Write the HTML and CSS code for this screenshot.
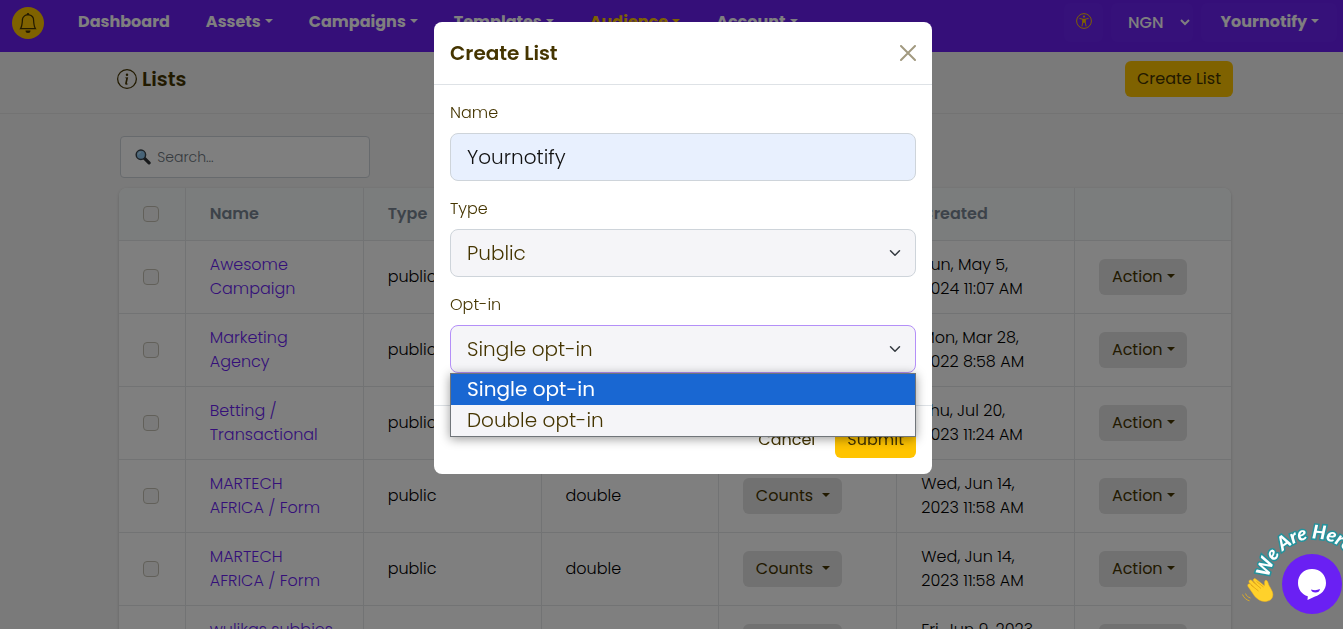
FILE: index.html
```html
<!DOCTYPE html>
<html lang="en">
  <head>
    <meta charset="UTF-8" />
    <meta name="viewport" content="width=device-width, initial-scale=1" />
    <title>Lists</title>
    <link rel="stylesheet" href="styles.css">
  </head>
  <body>
    <header class="navbar">
      <button class="bell" aria-label="Notifications">
        <svg width="20" height="20" viewBox="0 0 16 16" fill="currentColor">
          <path d="M8 16a2 2 0 0 0 2-2H6a2 2 0 0 0 2 2M8 1.918l-.797.161A4 4 0 0 0 4 6c0 .628-.134 2.197-.459 3.742-.160.767-.376 1.566-.663 2.258h10.244c-.287-.692-.502-1.490-.663-2.258C12.134 8.197 12 6.628 12 6a4 4 0 0 0-3.203-3.920zM14.220 12c.223.447.481.801.780 1H1c.299-.199.557-.553.780-1C2.680 10.200 3 6.880 3 6c0-2.420 1.720-4.440 4.005-4.901a1 1 0 1 1 1.990 0A5 5 0 0 1 13 6c0 .880.320 4.200 1.220 6" />
        </svg>
      </button>
      <nav class="nav">
        <a href="#">Dashboard</a>
        <a href="#" class="caret">Assets</a>
        <a href="#" class="caret">Campaigns</a>
        <a href="#" class="caret">Templates</a>
        <a href="#" class="caret active">Audience</a>
        <a href="#" class="caret">Account</a>
      </nav>
      <div class="nav-right">
        <button class="nav-box access" aria-label="Accessibility">
          <svg width="16" height="16" viewBox="0 0 16 16" fill="none" stroke="currentColor">
            <circle cx="8" cy="8" r="7.400" />
            <circle cx="8" cy="3.600" r="1.100" fill="currentColor" stroke="none" />
            <path d="M3.800 5.500l3 .7v3L6 13M12.200 5.500l-3 .7v3l.8 3.800" stroke-linecap="round" />
            <path d="M6.500 5.800h3v4h-3z" fill="currentColor" stroke="none" />
          </svg>
        </button>
        <select class="nav-box currency" aria-label="Currency">
          <option>NGN</option>
        </select>
        <a href="#" class="nav-box user caret">Yournotify</a>
      </div>
    </header>

    <div class="page-head">
      <h1>
        <svg width="20" height="20" viewBox="0 0 16 16" fill="currentColor">
          <path d="M8 15A7 7 0 1 1 8 1a7 7 0 0 1 0 14m0 1A8 8 0 1 0 8 0a8 8 0 0 0 0 16" />
          <path d="m8.930 6.588-2.290.287-.082.380.450.083c.294.070.352.176.288.469l-.738 3.468c-.194.897.105 1.319.808 1.319.545 0 1.178-.252 1.465-.598l.088-.416c-.200.176-.492.246-.686.246-.275 0-.375-.193-.304-.533zM9 4.500a1 1 0 1 1-2 0 1 1 0 0 1 2 0" />
        </svg>
        Lists
      </h1>
      <button class="btn btn-yellow">Create List</button>
    </div>

    <main class="content">
      <div class="search">
        <svg width="18" height="18" viewBox="0 0 18 18">
          <path d="M10.500 10.500l5 5" stroke="#303438" stroke-width="3.600" stroke-linecap="round" />
          <circle cx="6.500" cy="6.500" r="5.200" fill="#8fc7ee" stroke="#39424a" stroke-width="1.600" />
          <path d="M3.800 6.200a3 3 0 0 1 2.600-2.500" stroke="#d5efff" fill="none" />
        </svg>
        <input type="search" placeholder="Search..." aria-label="Search lists" />
      </div>

      <table class="lists">
        <colgroup>
          <col class="col-check" />
          <col class="col" span="5" />
          <col />
        </colgroup>
        <thead>
          <tr>
            <th class="check"><input type="checkbox" aria-label="Select all" /></th>
            <th>Name</th>
            <th>Type</th>
            <th>Opt-in</th>
            <th>Counts</th>
            <th>Created</th>
            <th></th>
          </tr>
        </thead>
        <tbody>
          <tr>
            <td class="check"><input type="checkbox" aria-label="Select row" /></td>
            <td><a href="#">Awesome Campaign</a></td>
            <td>public</td>
            <td>single</td>
            <td><button class="btn btn-gray counts caret">Counts</button></td>
            <td>Sun, May 5, 2024 11:07 AM</td>
            <td><button class="btn btn-gray caret">Action</button></td>
          </tr>
          <tr>
            <td class="check"><input type="checkbox" aria-label="Select row" /></td>
            <td><a href="#">Marketing Agency</a></td>
            <td>public</td>
            <td>single</td>
            <td><button class="btn btn-gray counts caret">Counts</button></td>
            <td>Mon, Mar 28, 2022 8:58 AM</td>
            <td><button class="btn btn-gray caret">Action</button></td>
          </tr>
          <tr>
            <td class="check"><input type="checkbox" aria-label="Select row" /></td>
            <td><a href="#">Betting / Transactional</a></td>
            <td>public</td>
            <td></td>
            <td></td>
            <td>Thu, Jul 20,<br />2023 11:24 AM</td>
            <td><button class="btn btn-gray caret">Action</button></td>
          </tr>
          <tr>
            <td class="check"><input type="checkbox" aria-label="Select row" /></td>
            <td><a href="#">MARTECH AFRICA / Form</a></td>
            <td>public</td>
            <td>double</td>
            <td><button class="btn btn-gray counts caret">Counts</button></td>
            <td>Wed, Jun 14,<br />2023 11:58 AM</td>
            <td><button class="btn btn-gray caret">Action</button></td>
          </tr>
          <tr>
            <td class="check"><input type="checkbox" aria-label="Select row" /></td>
            <td><a href="#">MARTECH AFRICA / Form</a></td>
            <td>public</td>
            <td>double</td>
            <td><button class="btn btn-gray counts caret">Counts</button></td>
            <td>Wed, Jun 14,<br />2023 11:58 AM</td>
            <td><button class="btn btn-gray caret">Action</button></td>
          </tr>
          <tr>
            <td class="check"><input type="checkbox" aria-label="Select row" /></td>
            <td><a href="#">wulikas subbies<br />list</a></td>
            <td>public</td>
            <td>double</td>
            <td><button class="btn btn-gray counts caret">Counts</button></td>
            <td>Fri, Jun 9, 2023<br />9:30 AM</td>
            <td><button class="btn btn-gray caret">Action</button></td>
          </tr>
        </tbody>
      </table>
    </main>

    <div class="backdrop">
      <form class="modal" role="dialog" aria-labelledby="modalTitle">
        <div class="modal-header">
          <h2 id="modalTitle">Create List</h2>
          <button type="button" class="close" aria-label="Close">
            <svg width="16" height="16" viewBox="0 0 16 16" stroke="currentColor" stroke-width="2" stroke-linecap="round">
              <path d="M1 1l14 14M15 1L1 15" />
            </svg>
          </button>
        </div>
        <div class="modal-body">
          <div class="field">
            <label for="name">Name</label>
            <input type="text" id="name" class="control filled" value="Yournotify" />
          </div>
          <div class="field">
            <label for="type">Type</label>
            <div class="select-wrap">
              <select id="type" class="control">
                <option>Public</option>
              </select>
              <svg class="chevron" width="12" height="12" viewBox="0 0 16 16" fill="none" stroke="currentColor" stroke-width="2" stroke-linecap="round" stroke-linejoin="round">
                <path d="m2 5 6 6 6-6" />
              </svg>
            </div>
          </div>
          <div class="field">
            <label for="optin">Opt-in</label>
            <div class="select-wrap">
              <select id="optin" class="control focused">
                <option>Single opt-in</option>
                <option>Double opt-in</option>
              </select>
              <svg class="chevron" width="12" height="12" viewBox="0 0 16 16" fill="none" stroke="currentColor" stroke-width="2" stroke-linecap="round" stroke-linejoin="round">
                <path d="m2 5 6 6 6-6" />
              </svg>
              <ul class="options" role="listbox" aria-label="Opt-in">
                <li role="option" aria-selected="true">Single opt-in</li>
                <li role="option" aria-selected="false">Double opt-in</li>
              </ul>
            </div>
          </div>
        </div>
        <div class="modal-footer">
          <button type="button" class="btn btn-link">Cancel</button>
          <button type="submit" class="btn btn-yellow">Submit</button>
        </div>
      </form>
    </div>

    <!-- Chat launcher -->
    <button class="chat" aria-label="Open chat">
      <svg width="140" height="120" viewBox="0 0 140 120">
        <defs>
          <path id="arc" d="M29 69A46 46 0 0 1 120 69" />
        </defs>
        <circle cx="72" cy="75" r="30" fill="#6a20f3" />
        <path d="M72 60c8.300 0 14 6 14 14 0 7-5 11.500-11 13.500L67.500 91l.3-3.800C61.500 85.500 58 80 58 74c0-8 5.700-14 14-14z" fill="#fff" />
        <path d="M71 80.500q5 1.500 9-.5-.5 3.500-4.500 3.500t-4.500-3z" fill="#6a20f3" />
        <text class="chat-text"><textPath href="#arc">We Are Here</textPath></text>
        <g fill="#ffd12b" stroke="#f0b31c" stroke-width=".5">
          <path d="M8 77.500c-1-2 1-3.500 2.500-2.200l3 2.600-4.300-4.400c-1-2 1-3.400 2.600-2l5 4.200-3.500-4c-.3-2 1.400-2.800 2.800-1.500l8.400 6.600c.5-1.500-.5-3.800.6-5.200 1.500-1 2.500.5 3 2.400 1 4 4.800 7.500 4.800 11.500 0 5-4 7-8.500 7-4 0-7-2.500-9.500-5z" />
        </g>
        <path d="M11 76l7.500 6M12.500 72.500l8.500 7M16.500 72.500l7 5.500" stroke="#e0a015" stroke-width=".8" fill="none" />
        <path d="M2.500 85.500c1.500 3.500 4 5.500 7 6.300M5.500 84.500c1 2.500 2.500 3.800 5 4.500" stroke="#d8a92c" fill="none" />
      </svg>
    </button>
  </body>
</html>
```
FILE: styles.css
```css
* {
  box-sizing: border-box;
}
body {
  margin: 0;
  overflow: hidden;
  background: #f4f4f4;
  color: #000;
  font-family: Poppins, Inter, sans-serif;
  font-size: 16px;
  font-weight: 300;
  line-height: 24px;
}
button,
input,
select {
  font: inherit;
  color: inherit;
}
h1,
h2 {
  margin: 0;
  color: #453500;
  font-size: 20px;
  font-weight: 600;
}
a {
  color: #6a1ef2;
  text-decoration: none;
}

/* small triangle after drop-down labels */
.caret::after {
  content: "";
  display: inline-block;
  margin-left: 4px;
  vertical-align: 4px;
  border-top: 4px solid;
  border-left: 4px solid transparent;
  border-right: 4px solid transparent;
}

.navbar {
  display: flex;
  align-items: flex-start;
  height: 52px;
  padding: 3px 6px 0 12px;
  background: #6a1ef2;
}
.bell {
  display: flex;
  align-items: center;
  justify-content: center;
  width: 32px;
  height: 32px;
  margin-top: 4px;
  padding: 0;
  border: 0;
  border-radius: 50%;
  background: #ffc400;
  color: #453500;
}
.nav {
  display: flex;
  gap: 36px;
  margin-left: 34px;
}
.nav a {
  color: #fff;
  font-weight: 700;
  line-height: 38px;
}
.nav a.active {
  color: #ffc400;
}
.nav-right {
  display: flex;
  gap: 8px;
  margin-left: auto;
}
.nav-box {
  height: 39px;
  border: 0;
  border-radius: 6px;
  background: #6d22f5;
  color: #fff;
}
.access {
  width: 39px;
  padding: 2px 0 0;
  color: #ffc400;
}
.currency {
  width: 82px;
  padding: 0 0 0 13px;
  font-weight: 500;
}
.user {
  width: 136px;
  padding-right: 18px;
  font-weight: 700;
  line-height: 38px;
  text-align: right;
}

.page-head {
  display: flex;
  align-items: center;
  justify-content: space-between;
  height: 62px;
  padding: 0 110px 8px 117px;
  border-bottom: 1px solid #e6e6e6;
}
.page-head h1 {
  display: flex;
  align-items: center;
  gap: 5px;
}

.btn {
  height: 36px;
  padding: 0 12px;
  border: 0;
  border-radius: 6px;
  color: #453500;
  font-weight: 400;
}
.btn-yellow {
  background: #ffc400;
}
.btn-gray {
  min-width: 88px;
  background: #e2e2e2;
}
.btn-link {
  background: none;
}
.counts {
  min-width: 99px;
}
.counts::after {
  margin-left: 9px;
}

.content {
  padding: 22px 112px 0 119px;
}
.search {
  display: flex;
  align-items: center;
  gap: 4px;
  width: 250px;
  height: 42px;
  margin: 0 0 10px 1px;
  padding: 0 14px;
  border: 1px solid #ced4da;
  border-radius: 4px;
  background: #fff;
}
.search input {
  width: 100%;
  border: 0;
  background: none;
  outline: none;
  font-size: 14px;
}
.search input::placeholder {
  color: #6c757d;
}

.lists {
  width: 100%;
  table-layout: fixed;
  border-spacing: 0;
  border-radius: 8px;
  background: #fff;
  box-shadow: 0 1px 3px rgba(0, 0, 0, 0.2);
}
.col-check {
  width: 6%;
}
.col {
  width: 16%;
}
.lists th,
.lists td {
  padding: 0 24px;
  border-right: 1px solid #e4e6e8;
  border-bottom: 1px solid #e4e6e8;
  text-align: left;
  vertical-align: middle;
}
.lists th {
  height: 53px;
  background: #f7fbfa;
  color: #7b8794;
  font-weight: 600;
}
.lists th:first-child {
  border-top-left-radius: 8px;
}
.lists th:last-child {
  border-top-right-radius: 8px;
}
.lists td {
  height: 73px;
}
.lists th:last-child,
.lists td:last-child {
  border-right: 0;
}
.lists .check input {
  display: block;
  appearance: none;
  width: 16px;
  height: 16px;
  margin: 0;
  border: 1px solid #c4c1b4;
  border-radius: 4px;
  background: #f5f5f4;
}

.backdrop {
  position: fixed;
  inset: 0;
  padding: 22px 0 0 23px;
  background: rgba(0, 0, 0, 0.5);
}
.modal {
  max-width: 498px;
  margin: 0 auto;
  border-radius: 8px;
  background: #fff;
  color: #453500;
}
.modal-header {
  display: flex;
  align-items: center;
  justify-content: space-between;
  padding: 16px;
  border-bottom: 1px solid #dee2e6;
}
.modal-header h2 {
  line-height: 30px;
}
.close {
  display: flex;
  padding: 0;
  border: 0;
  background: none;
  color: #a29a80;
}
.modal-body {
  padding: 16px;
}
.field {
  margin-bottom: 16px;
}
.field label {
  display: block;
  margin-bottom: 8px;
}
.control {
  display: block;
  width: 100%;
  height: 48px;
  padding: 0 16px;
  border: 1px solid #ced4da;
  border-radius: 8px;
  background: #f5f5f8;
  font-size: 20px;
  appearance: none;
  outline: none;
}
.control.filled {
  background: #e8f0fe;
  color: #111;
}
.control.focused {
  border-color: #b48ff8;
}
.select-wrap {
  position: relative;
}
.chevron {
  position: absolute;
  top: 18px;
  right: 15px;
  color: #343a40;
  pointer-events: none;
}
.options {
  position: absolute;
  top: 100%;
  left: 0;
  right: 0;
  margin: 0;
  padding: 0;
  border: 1px solid #70757a;
  background: #f5f5f8;
  box-shadow: 0 2px 10px rgba(0, 0, 0, 0.4);
  font-size: 20px;
  line-height: 31px;
  list-style: none;
}
.options li {
  padding: 0 16px;
}
.options [aria-selected="true"] {
  background: #1967d2;
  color: #fff;
  font-weight: 400;
}
.modal-footer {
  display: flex;
  justify-content: flex-end;
  gap: 8px;
  padding: 16px;
  border-top: 1px solid #dee2e6;
}

.chat {
  position: fixed;
  right: -37px;
  bottom: 0;
  padding: 0;
  border: 0;
  background: none;
}
.chat svg {
  display: block;
}
.chat-text {
  fill: #fff;
  stroke: #24929c;
  stroke-width: 3px;
  paint-order: stroke;
  font-family: Lato, sans-serif;
  font-size: 19px;
  font-style: italic;
  font-weight: 900;
}
```
